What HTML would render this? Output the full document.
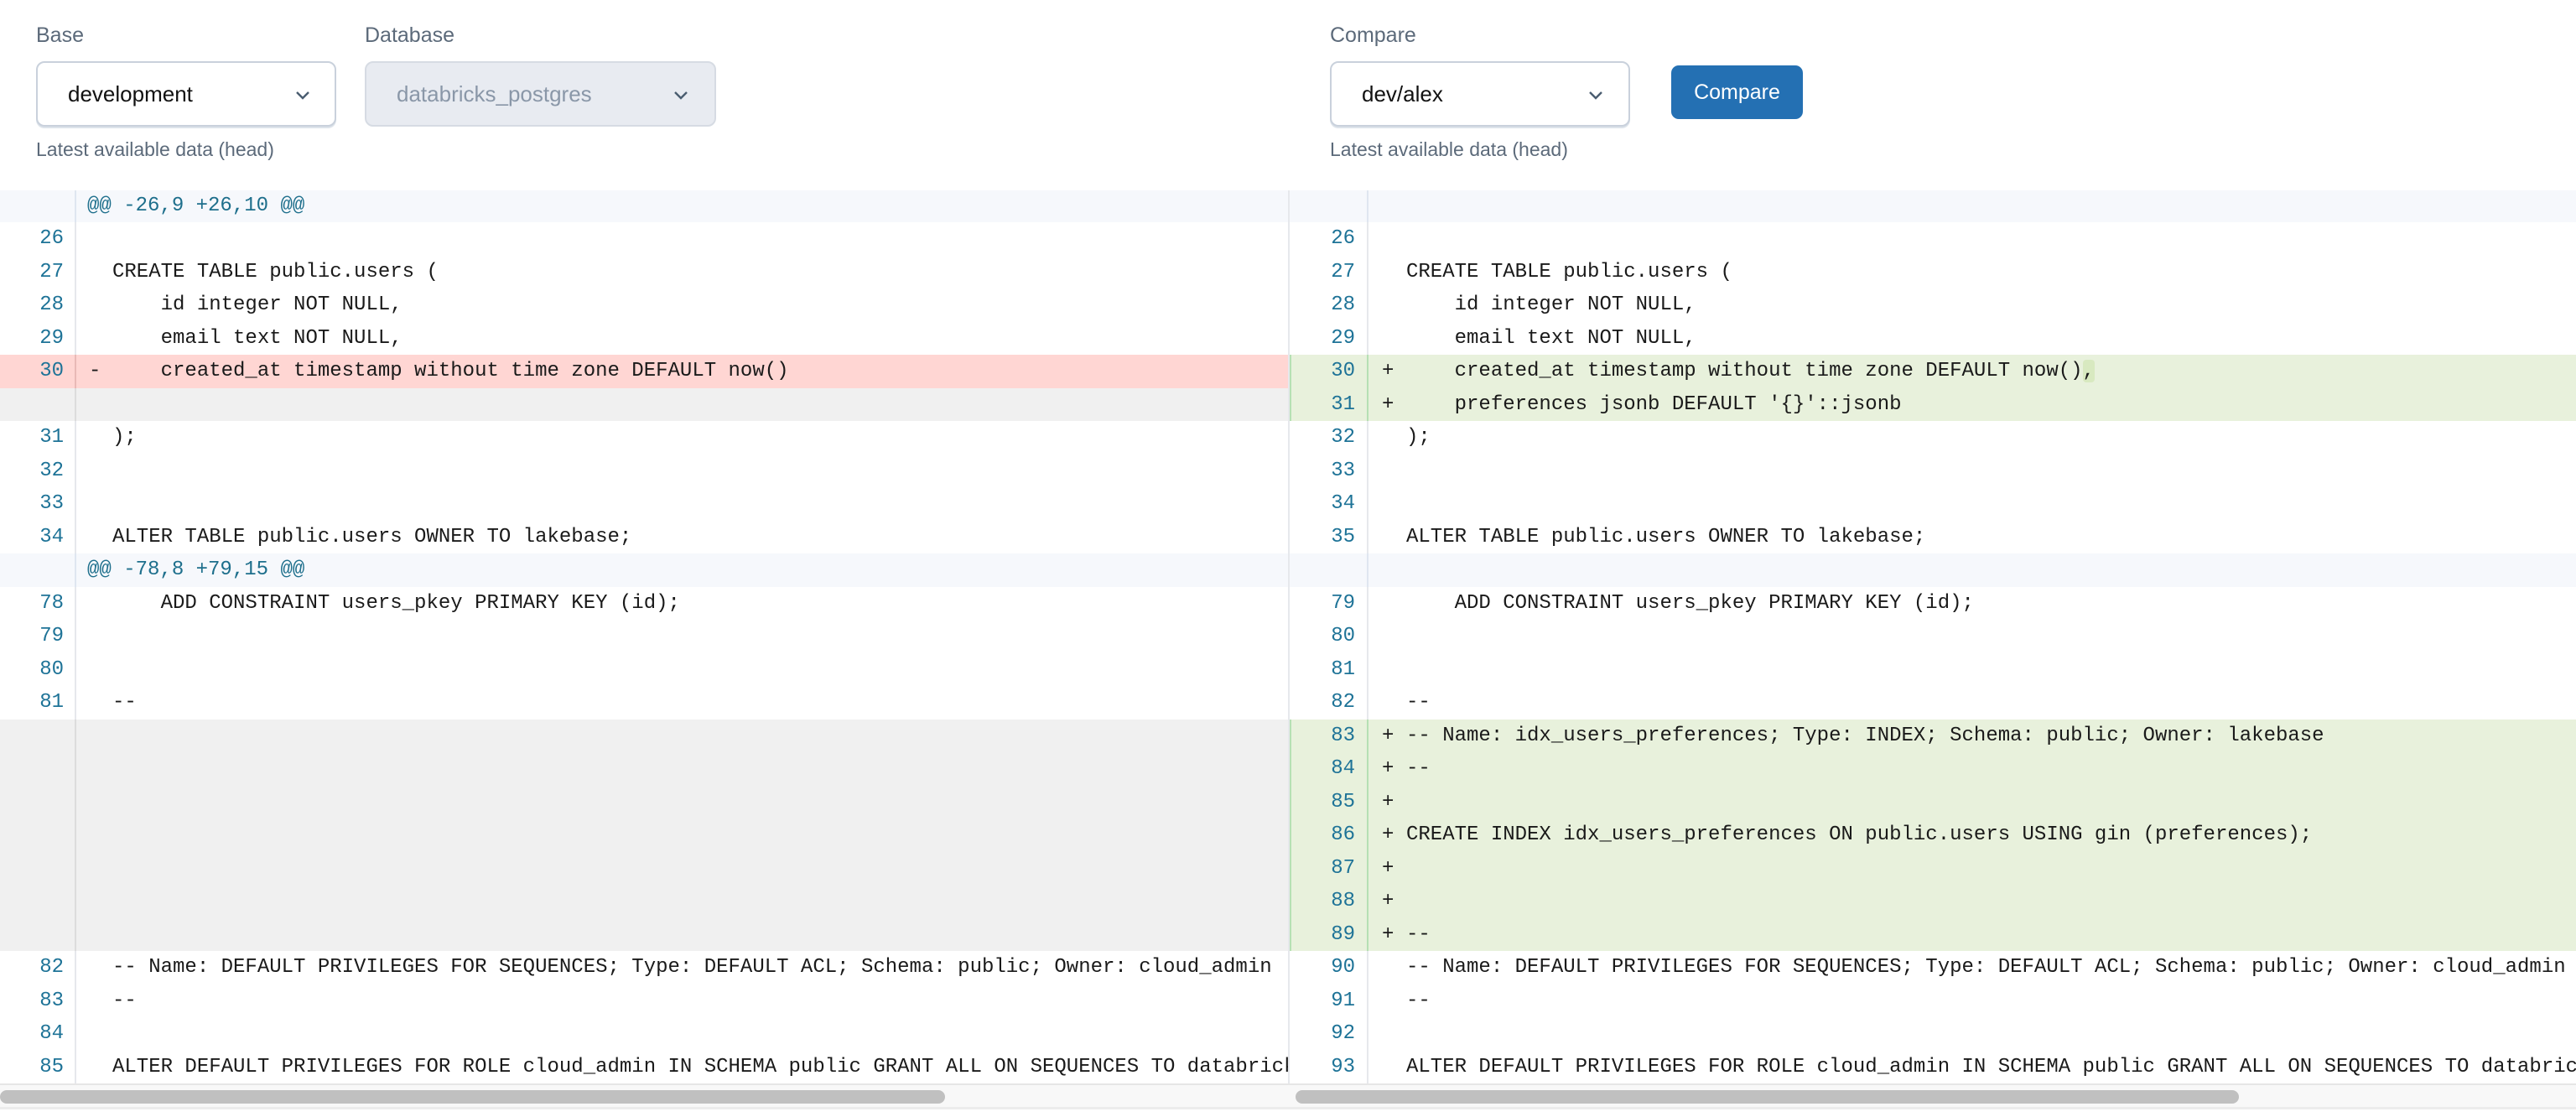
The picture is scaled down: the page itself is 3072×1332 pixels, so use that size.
<!DOCTYPE html>
<html><head><meta charset="utf-8"><style>
*{margin:0;padding:0;box-sizing:border-box}
body{width:3072px;height:1332px;background:#fff;position:relative;overflow:hidden;font-family:"Liberation Sans",sans-serif}
.lbl{position:absolute;top:28px;font-size:25px;color:#5c6a7a}
.help{position:absolute;top:165px;font-size:23px;color:#5c6a7a}
.sel{position:absolute;top:73px;height:78px;border:2px solid #c9d1dc;border-radius:10px;background:#fff;box-shadow:0 2px 0 #dde3ea;font-size:26px;color:#111;line-height:74px;padding-left:36px}
.sel svg{position:absolute;top:33px}
.btn{position:absolute;left:1993px;top:78px;width:157px;height:64px;background:#2470b3;border-radius:9px;color:#fff;font-size:25px;line-height:64px;text-align:center}
.panel{position:absolute;top:227px;height:1065px;overflow:hidden}
.row{position:absolute;left:0;width:100%;height:39.5px;font-family:"Liberation Mono",monospace;font-size:24px;line-height:39.5px;color:#1a1a1a;white-space:pre}
.num{position:absolute;top:0;height:100%;text-align:right;color:#1e7397;border-right:2px solid #e6e8ec}
.mk{position:absolute;top:0}
.code{position:absolute;top:0}
.hunk{background:#f6f8fc;color:#1e6f8c}
.hunk .num{border-right-color:#dfe6f0}
.del{background:#ffd6d3}.del .num{border-right-color:#e9b9b6}
.gray{background:#f0f0f0}.gray .num{border-right-color:#dcdcdc}
.add{background:#e8f1dc;box-shadow:inset 2px 0 0 #b6e0b4}.add .num{border-right-color:#b6e0b4}
.L .num{left:0;width:91px;padding-right:13px}
.L .mk{left:106px}.L .code{left:134px}
.R .num{left:0;width:94px;padding-right:14px}
.R .mk{left:110px}.R .code{left:139px}
.hl{background:#d8e9c0;border-radius:4px}
</style></head><body>
<div class="lbl" style="left:43px">Base</div>
<div class="lbl" style="left:435px">Database</div>
<div class="lbl" style="left:1586px">Compare</div>
<div class="sel" style="left:43px;width:358px">development<svg style="left:307px" width="18" height="11" viewBox="0 0 18 11"><path d="M2 2l7 7 7-7" fill="none" stroke="#4a5d70" stroke-width="2.4"/></svg></div>
<div class="sel" style="left:435px;width:419px;background:#e8ebf1;color:#8a97a8;box-shadow:none;border-color:#d6dbe3">databricks_postgres<svg style="left:366px" width="18" height="11" viewBox="0 0 18 11"><path d="M2 2l7 7 7-7" fill="none" stroke="#4a5d70" stroke-width="2.4"/></svg></div>
<div class="sel" style="left:1586px;width:358px">dev/alex<svg style="left:306px" width="18" height="11" viewBox="0 0 18 11"><path d="M2 2l7 7 7-7" fill="none" stroke="#4a5d70" stroke-width="2.4"/></svg></div>
<div class="btn">Compare</div>
<div class="help" style="left:43px">Latest available data (head)</div>
<div class="help" style="left:1586px">Latest available data (head)</div>

<div class="panel L" style="left:0;width:1538px;border-right:2px solid #e6e8ec">
<div class="row hunk" style="top:0;height:38px;line-height:38px"><div class="num"></div><div class="code" style="left:104px">@@ -26,9 +26,10 @@</div></div>
<div class="row" style="top:38px"><div class="num">26</div></div>
<div class="row" style="top:77.5px"><div class="num">27</div><div class="code">CREATE TABLE public.users (</div></div>
<div class="row" style="top:117px"><div class="num">28</div><div class="code">    id integer NOT NULL,</div></div>
<div class="row" style="top:156.5px"><div class="num">29</div><div class="code">    email text NOT NULL,</div></div>
<div class="row del" style="top:196px"><div class="num">30</div><div class="mk">-</div><div class="code">    created_at timestamp without time zone DEFAULT now()</div></div>
<div class="row gray" style="top:235.5px"><div class="num"></div></div>
<div class="row" style="top:275px"><div class="num">31</div><div class="code">);</div></div>
<div class="row" style="top:314.5px"><div class="num">32</div></div>
<div class="row" style="top:354px"><div class="num">33</div></div>
<div class="row" style="top:393.5px"><div class="num">34</div><div class="code">ALTER TABLE public.users OWNER TO lakebase;</div></div>
<div class="row hunk" style="top:433px"><div class="num"></div><div class="code" style="left:104px">@@ -78,8 +79,15 @@</div></div>
<div class="row" style="top:472.5px"><div class="num">78</div><div class="code">    ADD CONSTRAINT users_pkey PRIMARY KEY (id);</div></div>
<div class="row" style="top:512px"><div class="num">79</div></div>
<div class="row" style="top:551.5px"><div class="num">80</div></div>
<div class="row" style="top:591px"><div class="num">81</div><div class="code">--</div></div>
<div class="row gray" style="top:630.5px;height:276.5px"><div class="num"></div></div>
<div class="row" style="top:907px"><div class="num">82</div><div class="code">-- Name: DEFAULT PRIVILEGES FOR SEQUENCES; Type: DEFAULT ACL; Schema: public; Owner: cloud_admin</div></div>
<div class="row" style="top:946.5px"><div class="num">83</div><div class="code">--</div></div>
<div class="row" style="top:986px"><div class="num">84</div></div>
<div class="row" style="top:1025.5px"><div class="num">85</div><div class="code">ALTER DEFAULT PRIVILEGES FOR ROLE cloud_admin IN SCHEMA public GRANT ALL ON SEQUENCES TO databricks_writer;</div></div>
</div>

<div class="panel R" style="left:1538px;width:1534px">
<div class="row hunk" style="top:0;height:38px"><div class="num"></div></div>
<div class="row" style="top:38px"><div class="num">26</div></div>
<div class="row" style="top:77.5px"><div class="num">27</div><div class="code">CREATE TABLE public.users (</div></div>
<div class="row" style="top:117px"><div class="num">28</div><div class="code">    id integer NOT NULL,</div></div>
<div class="row" style="top:156.5px"><div class="num">29</div><div class="code">    email text NOT NULL,</div></div>
<div class="row add" style="top:196px"><div class="num">30</div><div class="mk">+</div><div class="code">    created_at timestamp without time zone DEFAULT now()<span class="hl">,</span></div></div>
<div class="row add" style="top:235.5px"><div class="num">31</div><div class="mk">+</div><div class="code">    preferences jsonb DEFAULT '{}'::jsonb</div></div>
<div class="row" style="top:275px"><div class="num">32</div><div class="code">);</div></div>
<div class="row" style="top:314.5px"><div class="num">33</div></div>
<div class="row" style="top:354px"><div class="num">34</div></div>
<div class="row" style="top:393.5px"><div class="num">35</div><div class="code">ALTER TABLE public.users OWNER TO lakebase;</div></div>
<div class="row hunk" style="top:433px"><div class="num"></div></div>
<div class="row" style="top:472.5px"><div class="num">79</div><div class="code">    ADD CONSTRAINT users_pkey PRIMARY KEY (id);</div></div>
<div class="row" style="top:512px"><div class="num">80</div></div>
<div class="row" style="top:551.5px"><div class="num">81</div></div>
<div class="row" style="top:591px"><div class="num">82</div><div class="code">--</div></div>
<div class="row add" style="top:630.5px"><div class="num">83</div><div class="mk">+</div><div class="code">-- Name: idx_users_preferences; Type: INDEX; Schema: public; Owner: lakebase</div></div>
<div class="row add" style="top:670px"><div class="num">84</div><div class="mk">+</div><div class="code">--</div></div>
<div class="row add" style="top:709.5px"><div class="num">85</div><div class="mk">+</div></div>
<div class="row add" style="top:749px"><div class="num">86</div><div class="mk">+</div><div class="code">CREATE INDEX idx_users_preferences ON public.users USING gin (preferences);</div></div>
<div class="row add" style="top:788.5px"><div class="num">87</div><div class="mk">+</div></div>
<div class="row add" style="top:828px"><div class="num">88</div><div class="mk">+</div></div>
<div class="row add" style="top:867.5px"><div class="num">89</div><div class="mk">+</div><div class="code">--</div></div>
<div class="row" style="top:907px"><div class="num">90</div><div class="code">-- Name: DEFAULT PRIVILEGES FOR SEQUENCES; Type: DEFAULT ACL; Schema: public; Owner: cloud_admin</div></div>
<div class="row" style="top:946.5px"><div class="num">91</div><div class="code">--</div></div>
<div class="row" style="top:986px"><div class="num">92</div></div>
<div class="row" style="top:1025.5px"><div class="num">93</div><div class="code">ALTER DEFAULT PRIVILEGES FOR ROLE cloud_admin IN SCHEMA public GRANT ALL ON SEQUENCES TO databricks_writer;</div></div>
</div>

<div style="position:absolute;left:0;top:1292px;width:3072px;height:31px;background:#f8f8f8;border-top:2px solid #e6e6e6;border-bottom:3px solid #ececec"></div>
<div style="position:absolute;left:0;top:1300px;width:1127px;height:16px;background:#c0c0c0;border-radius:8px"></div>
<div style="position:absolute;left:1545px;top:1300px;width:1125px;height:16px;background:#c0c0c0;border-radius:8px"></div>
</body></html>
